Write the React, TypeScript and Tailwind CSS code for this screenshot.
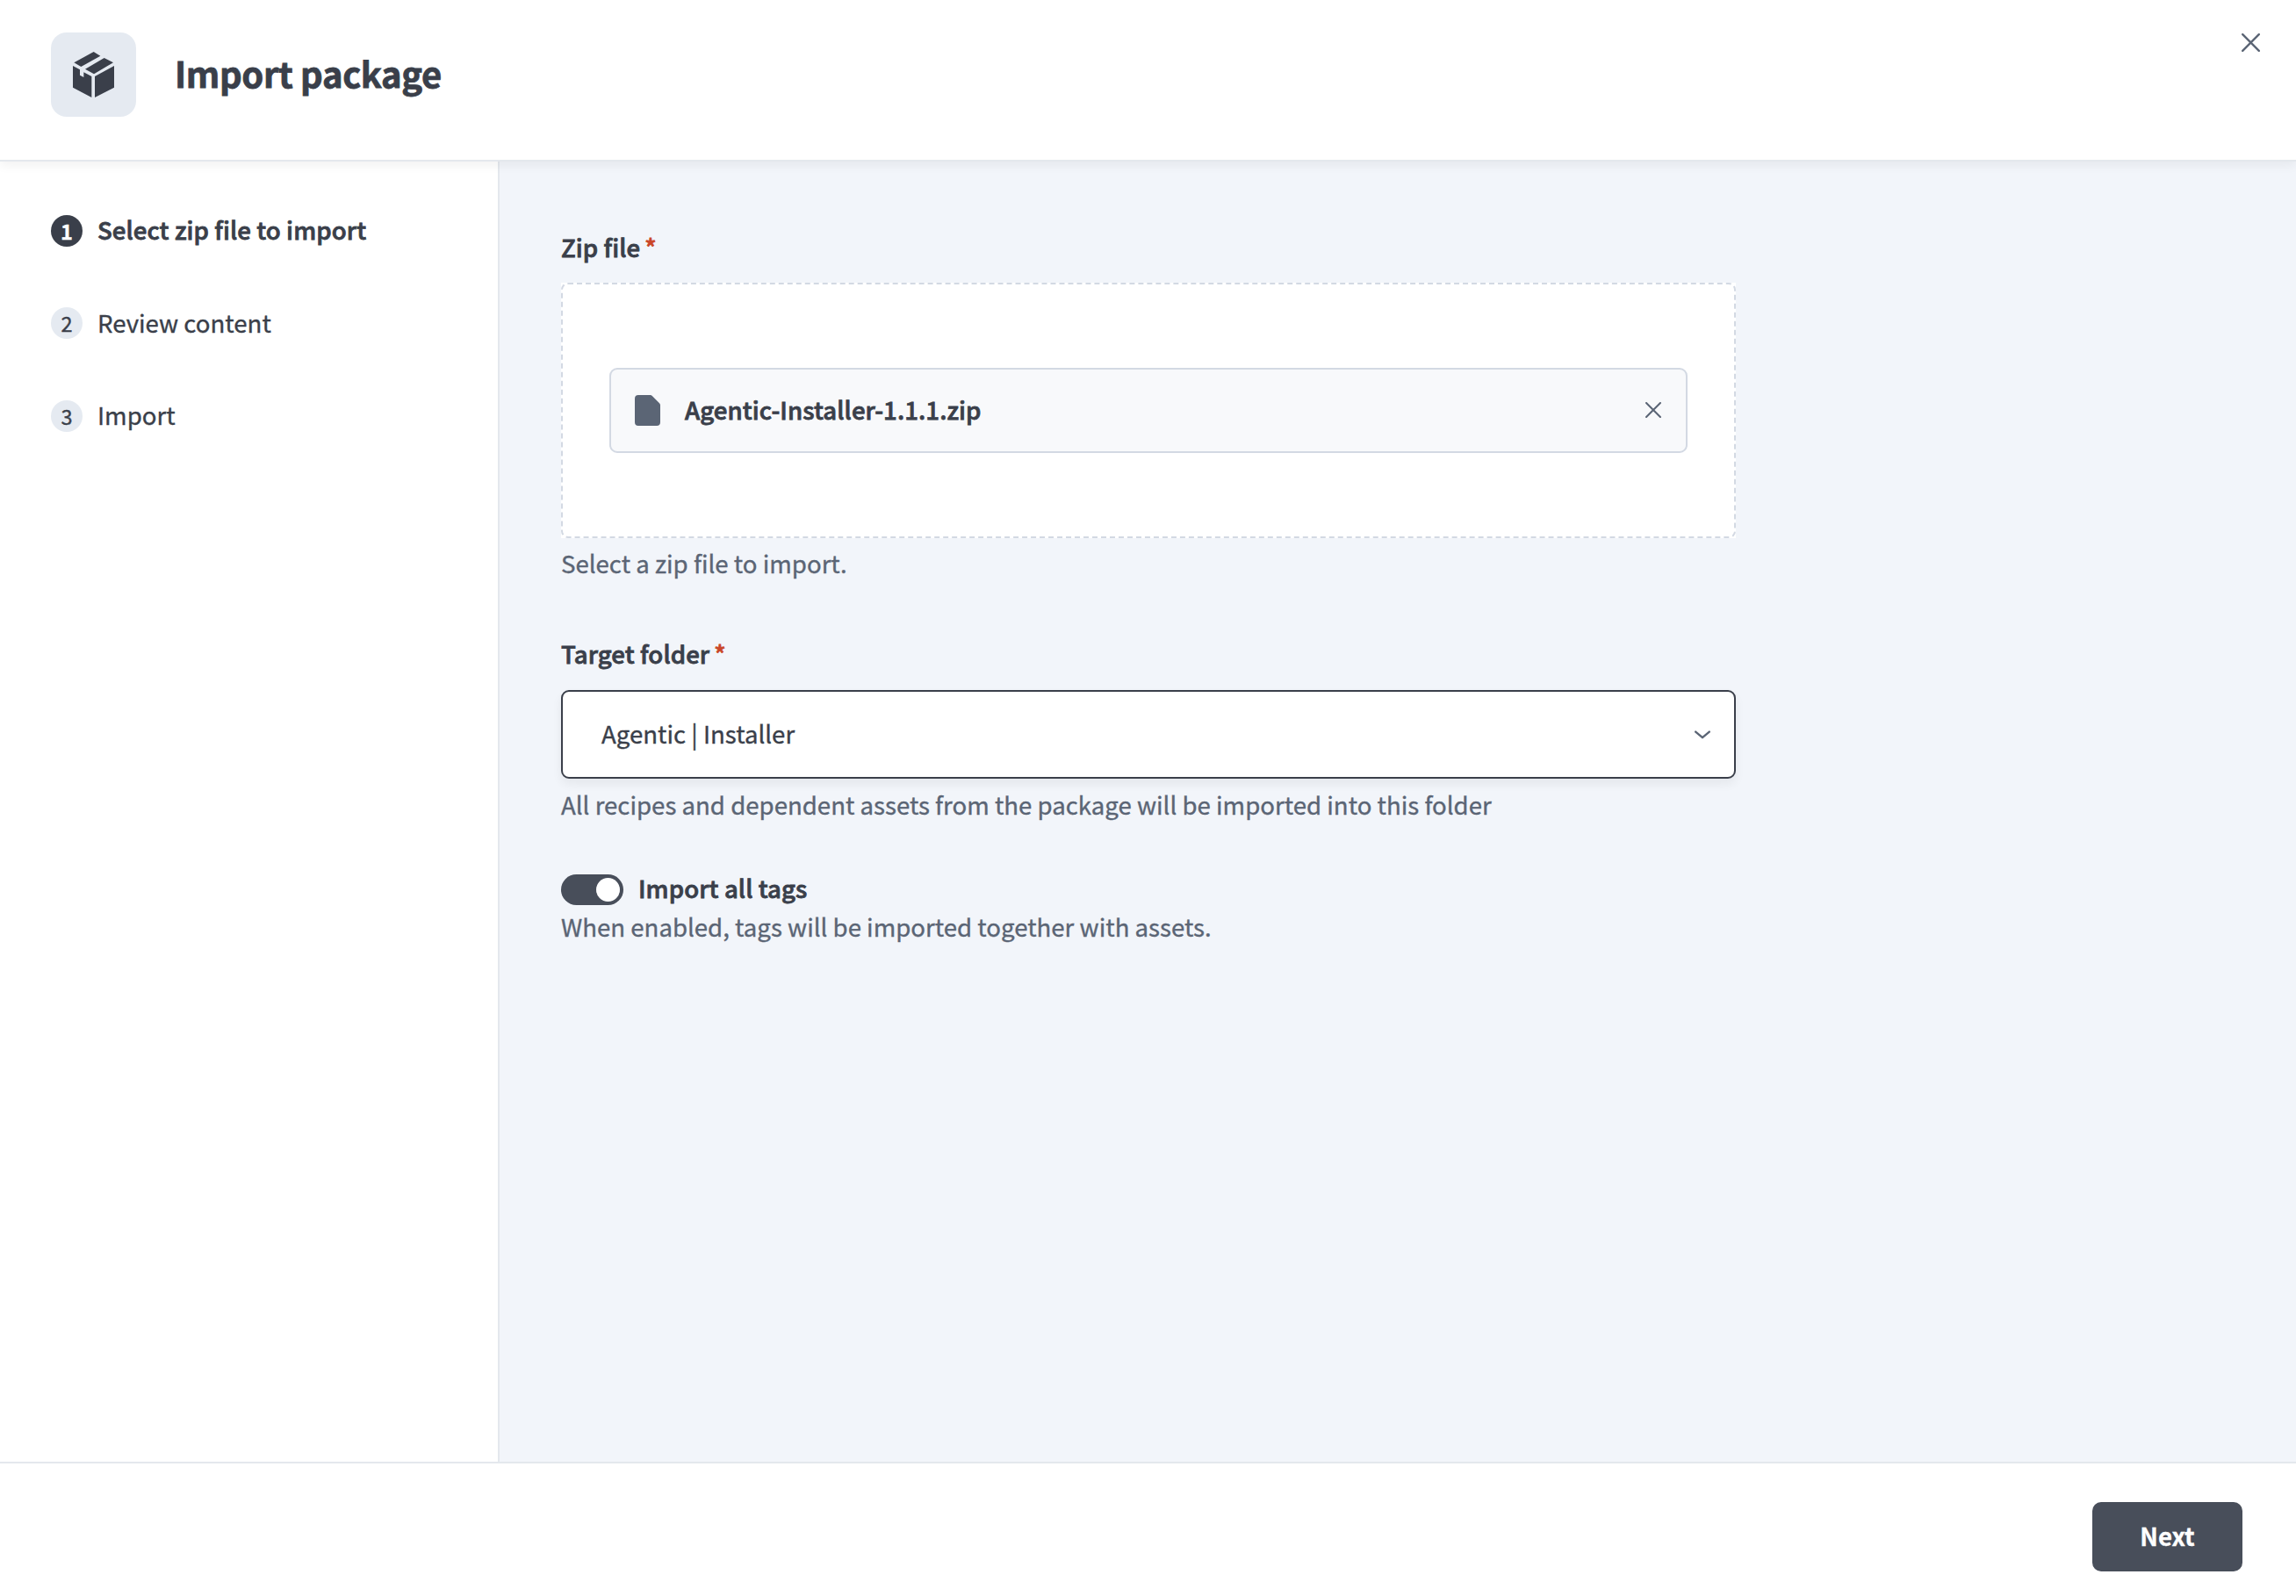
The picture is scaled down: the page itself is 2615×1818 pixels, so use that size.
import { useState } from "react"

const steps = ["Select zip file to import", "Review content", "Import"]

// stands in for the 600 weight, which sits between medium and bold
const semibold = "font-medium tracking-[0.08px] [-webkit-text-stroke:0.8px_currentColor]"

const PackageIcon = () => (
  <svg width="47" height="52" viewBox="0 0 141 156" fill="currentColor">
    <path d="M71 0 94 14 28 51 4 37Z" />
    <path d="M107 21 138 37 72 76 42 59Z" />
    <path d="M0 48 24 61V80L37 87V70L64 84V156L0 122Z" />
    <path d="M141 48 75 84V156L141 122Z" />
  </svg>
)

const CloseIcon = ({ className }: { className: string }) => (
  <svg viewBox="0 0 21 21" fill="none" stroke="currentColor" strokeWidth="2.4" strokeLinecap="round" className={className}>
    <path d="M1.2 1.2 19.8 19.8M19.8 1.2 1.2 19.8" />
  </svg>
)

const FileIcon = () => (
  <svg width="29" height="35" viewBox="0 0 29 35" fill="#5b6575">
    <path d="M4 0H17.6a3 3 0 0 1 2.2.9L28 9.3a3 3 0 0 1 1 2.2V31a4 4 0 0 1-4 4H4a4 4 0 0 1-4-4V4a4 4 0 0 1 4-4Z" />
  </svg>
)

const Label = ({ children }: { children: string }) => (
  <div className={`flex h-10 ${semibold}`}>
    <span>{children}</span>
    <span className="ml-[5px] text-[#ca4628]">*</span>
  </div>
)

export default function App() {
  const [current, setCurrent] = useState(0)
  const [tags, setTags] = useState(true)

  return (
    <div className="flex h-[1818px] w-[2615px] flex-col overflow-hidden bg-white font-['Noto_Sans_CJK_SC','Noto_Sans',sans-serif] text-[27.6px] leading-[40px] text-[#3a3f4a] [-webkit-text-stroke:0.35px_currentColor]">
      <header className="relative z-10 flex h-[184px] shrink-0 items-start border-b-2 border-[#e4e8ed] bg-white pl-[58px] shadow-[0_4px_12px_rgba(0,0,0,0.06)]">
        <div className="mt-[37px] flex h-24 w-[97px] items-center justify-center rounded-[18px] bg-[#e5eaf1]">
          <PackageIcon />
        </div>
        <h1 className="mt-[53px] ml-[44px] text-[40px] leading-[60px] font-bold tracking-[-0.4px] [-webkit-text-stroke:0.8px_currentColor]">
          Import package
        </h1>
        <button aria-label="Close" className="mt-[38px] mr-[41px] ml-auto text-[#5b6575]">
          <CloseIcon className="size-[21px]" />
        </button>
      </header>

      <div className="flex min-h-0 flex-1">
        <nav className="w-[569px] shrink-0 border-r-2 border-[#e4e8ed] pt-[60.5px] pl-[58px]">
          <ol className="flex flex-col gap-[69.6px]">
            {steps.map((step, i) => (
              <li key={step} className="flex h-9 cursor-pointer items-center" onClick={() => setCurrent(i)}>
                <span
                  className={`flex size-9 items-center justify-center rounded-full text-[23.5px] leading-9 ${
                    i === current ? "bg-[#3a3f4a] font-bold text-white" : "bg-[#e5eaf1]"
                  }`}
                >
                  {i + 1}
                </span>
                <span className={`mb-[3px] ml-[17px] ${i === current ? semibold : ""}`}>{step}</span>
              </li>
            ))}
          </ol>
        </nav>

        <main className="flex-1 bg-[#f2f5fa] pt-[77px] pl-[70px]">
          <section className="w-[1338px]">
            <Label>Zip file</Label>
            <div className="mt-[21px] bg-white">
              <div className="flex h-[291px] items-center rounded-[8px] border-2 border-dashed border-[#d3d9e3] px-[53px]">
                <div className="flex h-[97px] w-full items-center rounded-[9px] border-2 border-[#d3d9e3] bg-[#f8f9fb] pr-[28px] pl-[27px]">
                  <FileIcon />
                  <span className={`mb-[3px] ml-[28px] ${semibold}`}>Agentic-Installer-1.1.1.zip</span>
                  <button aria-label="Remove file" className="mb-px ml-auto text-[#5b6575]">
                    <CloseIcon className="size-[18px]" />
                  </button>
                </div>
              </div>
            </div>
            <p className="mt-2 text-[#5b6575]">Select a zip file to import.</p>
          </section>

          <section className="mt-[63px] w-[1338px]">
            <Label>Target folder</Label>
            <div className="mt-[22px] flex h-[101px] items-center justify-between rounded-[9px] border-2 border-[#3a3f4a] bg-white pr-[27px] pl-[44px] shadow-[0_6px_12px_rgba(0,0,0,0.06)]">
              <span className="mb-[3px]">Agentic | Installer</span>
              <svg width="18" height="10" viewBox="0 0 18 10" fill="none" stroke="#5b6575" strokeWidth="2.4" strokeLinecap="round" strokeLinejoin="round">
                <path d="M1.2 1.6 9 8.2 16.8 1.6" />
              </svg>
            </div>
            <p className="mt-[9px] text-[#5b6575]">
              All recipes and dependent assets from the package will be imported into this folder
            </p>
          </section>

          <section className="mt-[55px] w-[1338px]">
            <div className="flex h-10">
              <button
                role="switch"
                aria-checked={tags}
                aria-label="Import all tags"
                onClick={() => setTags(!tags)}
                className={`mt-[5px] flex h-[35px] w-[71px] items-center rounded-full px-1 ${
                  tags ? "justify-end bg-[#484e5a]" : "justify-start bg-[#a9b2c0]"
                }`}
              >
                <span className="size-[27px] rounded-full bg-white" />
              </button>
              <span className={`ml-[17px] ${semibold}`}>Import all tags</span>
            </div>
            <p className="mt-1 text-[#5b6575]">When enabled, tags will be imported together with assets.</p>
          </section>
        </main>
      </div>

      <footer className="flex h-[153px] shrink-0 items-start justify-end border-t-2 border-[#e4e8ed] bg-white pt-[44px] pr-[61px]">
        <button className="h-[79px] w-[171px] rounded-[10px] bg-[#484e5a] pb-[4px] text-[27.5px] font-bold text-white">
          Next
        </button>
      </footer>
    </div>
  )
}
